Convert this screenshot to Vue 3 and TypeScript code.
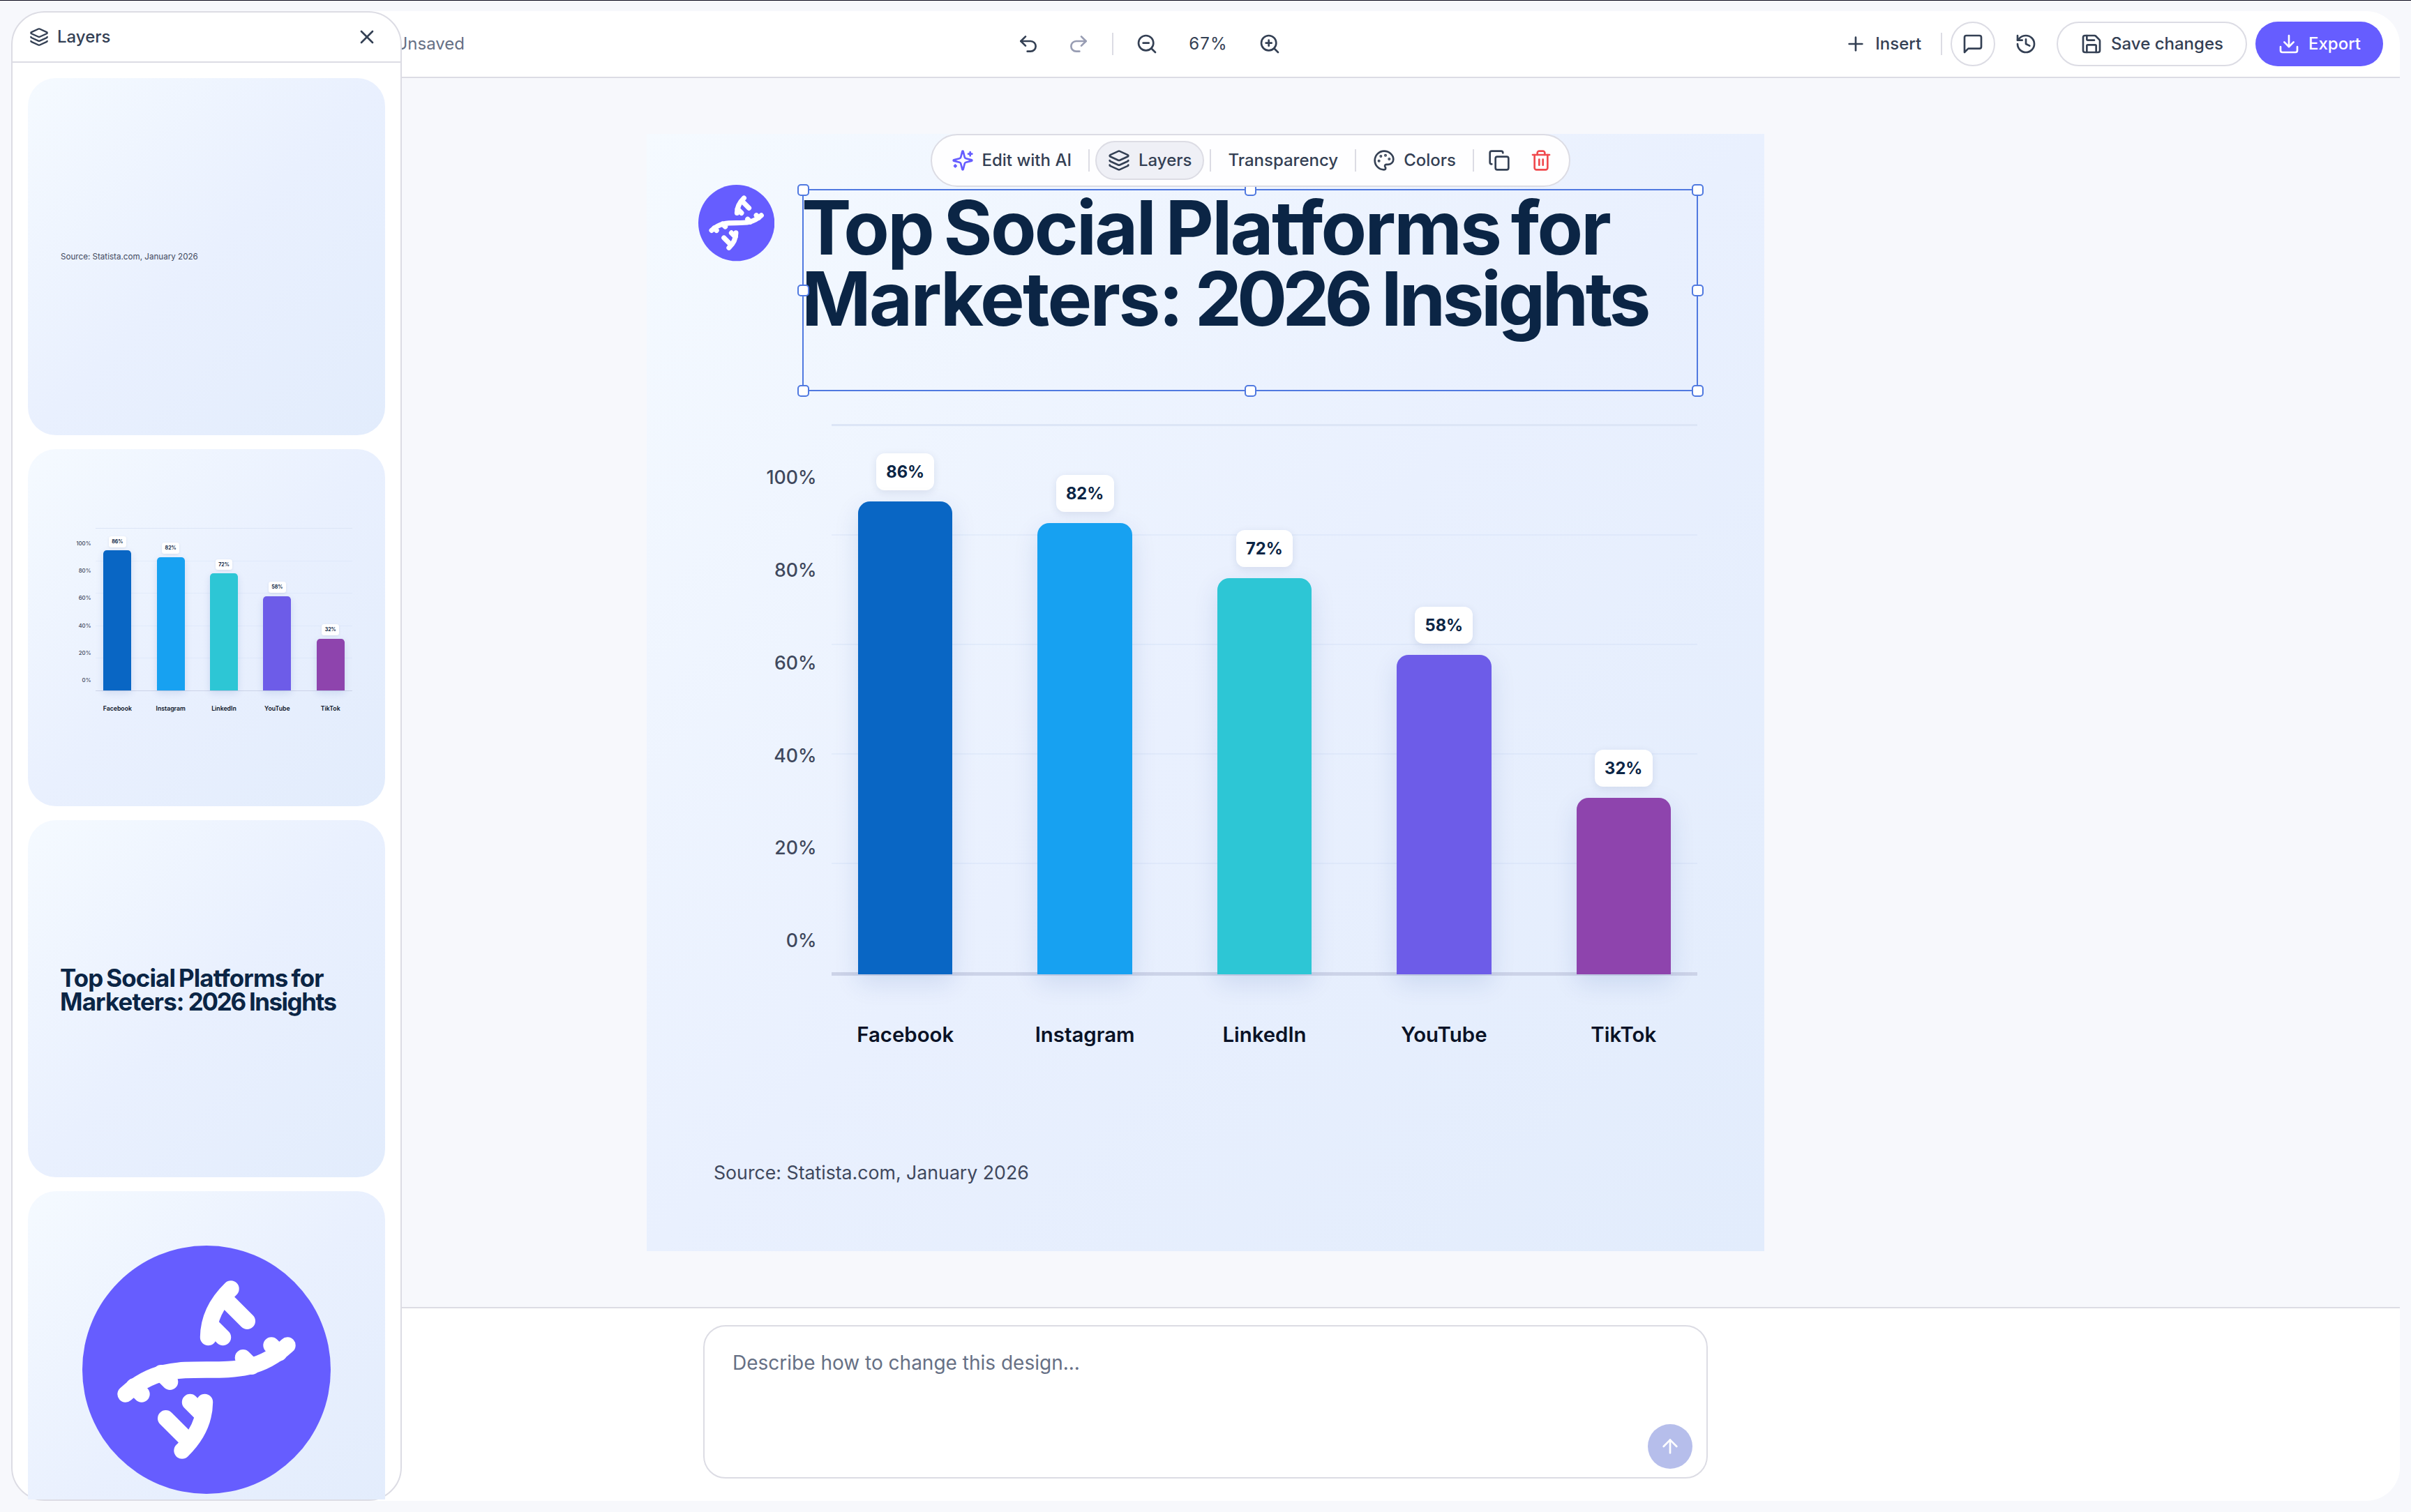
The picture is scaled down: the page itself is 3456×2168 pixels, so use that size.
<script setup lang="ts">
import { h, type FunctionalComponent } from 'vue'

type Shape = [tag: string, attrs: Record<string, string | number>]

const p = (d: string): Shape => ['path', { d }]

const icons: Record<string, Shape[]> = {
  layers: [
    p('M12.83 2.18a2 2 0 0 0-1.66 0L2.6 6.08a1 1 0 0 0 0 1.83l8.58 3.91a2 2 0 0 0 1.66 0l8.58-3.9a1 1 0 0 0 0-1.83z'),
    p('M2 12a1 1 0 0 0 .58.91l8.6 3.91a2 2 0 0 0 1.65 0l8.58-3.9A1 1 0 0 0 22 12'),
    p('M2 17a1 1 0 0 0 .58.91l8.6 3.91a2 2 0 0 0 1.65 0l8.58-3.9A1 1 0 0 0 22 17'),
  ],
  close: [p('M18 6 6 18'), p('m6 6 12 12')],
  undo: [p('M9 14 4 9l5-5'), p('M4 9h10.5a5.5 5.5 0 0 1 0 11H11')],
  redo: [p('m15 14 5-5-5-5'), p('M20 9H9.5a5.5 5.5 0 0 0 0 11H13')],
  zoomOut: [['circle', { cx: 11, cy: 11, r: 8 }], p('m21 21-4.35-4.35'), p('M8 11h6')],
  zoomIn: [['circle', { cx: 11, cy: 11, r: 8 }], p('m21 21-4.35-4.35'), p('M11 8v6'), p('M8 11h6')],
  plus: [p('M5 12h14'), p('M12 5v14')],
  comment: [p('M21 15a2 2 0 0 1-2 2H7l-4 4V5a2 2 0 0 1 2-2h14a2 2 0 0 1 2 2z')],
  history: [p('M3 12a9 9 0 1 0 9-9 9.75 9.75 0 0 0-6.74 2.74L3 8'), p('M3 3v5h5'), p('M12 7v5l4 2')],
  save: [
    p('M15.2 3a2 2 0 0 1 1.4.6l3.8 3.8a2 2 0 0 1 .6 1.4V19a2 2 0 0 1-2 2H5a2 2 0 0 1-2-2V5a2 2 0 0 1 2-2z'),
    p('M17 21v-7a1 1 0 0 0-1-1H8a1 1 0 0 0-1 1v7'),
    p('M7 3v4a1 1 0 0 0 1 1h7'),
  ],
  download: [p('M21 15v4a2 2 0 0 1-2 2H5a2 2 0 0 1-2-2v-4'), p('m7 10 5 5 5-5'), p('M12 15V3')],
  sparkles: [
    p('M9.937 15.5A2 2 0 0 0 8.5 14.063l-6.135-1.582a.5.5 0 0 1 0-.962L8.5 9.936A2 2 0 0 0 9.937 8.5l1.582-6.135a.5.5 0 0 1 .963 0L14.063 8.5A2 2 0 0 0 15.5 9.937l6.135 1.581a.5.5 0 0 1 0 .964L15.5 14.063a2 2 0 0 0-1.437 1.437l-1.582 6.135a.5.5 0 0 1-.963 0z'),
    p('M20 3v4'), p('M22 5h-4'), p('M4 17v2'), p('M5 18H3'),
  ],
  palette: [
    p('M12 2C6.5 2 2 6.5 2 12s4.5 10 10 10c.926 0 1.648-.746 1.648-1.688 0-.437-.18-.835-.437-1.125-.29-.289-.438-.652-.438-1.125a1.64 1.64 0 0 1 1.668-1.668h1.996c3.051 0 5.555-2.503 5.555-5.554C21.965 6.012 17.461 2 12 2z'),
    ['circle', { cx: 13.5, cy: 6.5, r: 0.5, fill: 'currentColor' }],
    ['circle', { cx: 17.5, cy: 10.5, r: 0.5, fill: 'currentColor' }],
    ['circle', { cx: 8.5, cy: 7.5, r: 0.5, fill: 'currentColor' }],
    ['circle', { cx: 6.5, cy: 12.5, r: 0.5, fill: 'currentColor' }],
  ],
  copy: [
    ['rect', { x: 8, y: 8, width: 14, height: 14, rx: 2 }],
    p('M4 16c-1.1 0-2-.9-2-2V4c0-1.1.9-2 2-2h10c1.1 0 2 .9 2 2'),
  ],
  trash: [
    p('M3 6h18'), p('M19 6v14c0 1-1 2-2 2H7c-1 0-2-1-2-2V6'),
    p('M8 6V4c0-1 1-2 2-2h4c1 0 2 1 2 2v2'), p('M10 11v6'), p('M14 11v6'),
  ],
  arrowUp: [p('m5 12 7-7 7 7'), p('M12 19V5')],
}

const Icon: FunctionalComponent<{ name: string; size?: number }> = (props) =>
  h(
    'svg',
    {
      width: props.size ?? 32,
      height: props.size ?? 32,
      viewBox: '0 0 24 24',
      fill: 'none',
      stroke: 'currentColor',
      'stroke-width': 2,
      'stroke-linecap': 'round',
      'stroke-linejoin': 'round',
    },
    icons[props.name].map(([tag, attrs]) => h(tag, attrs)),
  )
Icon.props = ['name', 'size']

const half = [
  'M213 62Q181 93 180.500 131.500',
  'M204 76 236.300 108.300',
  'M183.500 113.500 201.500 131.500',
  'M271 143 282 154',
  'M230.400 160.700 243 173.300',
]

const Logo: FunctionalComponent = () =>
  h('svg', { viewBox: '0 0 356 356' }, [
    h('circle', { cx: 178, cy: 178, r: 178, fill: '#665dff' }),
    h('g', { fill: 'none', stroke: '#fff', 'stroke-width': 23.4, 'stroke-linecap': 'round', 'stroke-linejoin': 'round' }, [
      h('path', { d: 'M62 213C100 178 135 178 178 178S256 178 294 143' }),
      ...half.map((d) => h('path', { d })),
      h('g', { transform: 'rotate(180 178 178)' }, half.map((d) => h('path', { d }))),
    ]),
  ])

const platforms = [
  { name: 'Facebook', value: 86, color: '#0966c4' },
  { name: 'Instagram', value: 82, color: '#17a1f1' },
  { name: 'LinkedIn', value: 72, color: '#2dc6d5' },
  { name: 'YouTube', value: 58, color: '#6d5ce8' },
  { name: 'TikTok', value: 32, color: '#8e44ad' },
]
const ticks = [100, 80, 60, 40, 20, 0]

const BarChart: FunctionalComponent = () =>
  h('div', { class: 'chart' }, [
    h('div', { class: 'chart-axis' }, ticks.map((t) => h('span', `${t}%`))),
    h('div', { class: 'chart-body' }, [
      h('div', { class: 'chart-plot' }, [
        h('div', { class: 'chart-grid' }, ticks.map(() => h('i'))),
        ...platforms.map((b) =>
          h('div', { class: 'chart-col' }, [
            h('span', { class: 'chart-badge' }, `${b.value}%`),
            h('div', {
              class: 'chart-bar',
              style: { height: `calc(var(--u) * ${b.value * 7.883})`, background: b.color },
            }),
          ]),
        ),
      ]),
      h('div', { class: 'chart-names' }, platforms.map((b) => h('span', b.name))),
    ]),
  ])

const handles = ['tl', 'tc', 'tr', 'ml', 'mr', 'bl', 'bc', 'br']
</script>

<template>
  <div class="page">
    <main class="editor">
      <header class="topbar">
        <span class="status">Unsaved</span>
        <div class="history-tools">
          <button class="icon-btn"><Icon name="undo" /></button>
          <button class="icon-btn off"><Icon name="redo" /></button>
          <i class="rule"></i>
          <button class="icon-btn"><Icon name="zoomOut" /></button>
          <span class="zoom">67%</span>
          <button class="icon-btn"><Icon name="zoomIn" /></button>
        </div>
        <div class="actions">
          <button class="label-btn insert"><Icon name="plus" />Insert</button>
          <i class="rule"></i>
          <button class="icon-btn ring"><Icon name="comment" /></button>
          <button class="icon-btn"><Icon name="history" /></button>
          <button class="label-btn save"><Icon name="save" />Save changes</button>
          <button class="label-btn export"><Icon name="download" />Export</button>
        </div>
      </header>

      <section class="stage">
        <div class="artboard sky">
          <Logo class="brand" />
          <h1 class="headline">
            <span class="line first">Top Social Platforms for</span>
            <span class="line second">Marketers: <span class="year">2026</span> <span class="tail">Insights</span></span>
          </h1>
          <BarChart class="main-chart" />
          <p class="source">Source: Statista.com, January 2026</p>
          <div class="selection"><b v-for="k in handles" :key="k" :class="k"></b></div>
          <nav class="float-bar">
            <button class="label-btn tool"><Icon name="sparkles" class="violet" />Edit with AI</button>
            <i class="rule"></i>
            <button class="label-btn tool active"><Icon name="layers" />Layers</button>
            <i class="rule"></i>
            <button class="label-btn tool">Transparency</button>
            <i class="rule"></i>
            <button class="label-btn tool"><Icon name="palette" />Colors</button>
            <i class="rule"></i>
            <div class="pair">
              <button class="square"><Icon name="copy" /></button>
              <button class="square red"><Icon name="trash" /></button>
            </div>
          </nav>
        </div>
      </section>

      <footer class="prompt-area">
        <div class="prompt">
          <span class="placeholder">Describe how to change this design...</span>
          <button class="send"><Icon name="arrowUp" /></button>
        </div>
      </footer>
    </main>

    <aside class="panel">
      <div class="panel-head">
        <Icon name="layers" :size="28" />
        <span>Layers</span>
        <Icon name="close" class="close" />
      </div>
      <div class="cards">
        <div class="card sky mid"><p class="mini-source">Source: Statista.com, January 2026</p></div>
        <div class="card sky"><BarChart class="mini-chart" /></div>
        <div class="card sky mid">
          <h2 class="mini-title">
            <span class="line first">Top Social Platforms for</span>
            <span class="line second">Marketers: <span class="year">2026</span> <span class="tail">Insights</span></span>
          </h2>
        </div>
        <div class="card sky mid center"><Logo class="mini-logo" /></div>
      </div>
    </aside>
  </div>
</template>

<style>
body {
  background: #f7f8fc;
}

.chart {
  display: flex;
  gap: calc(var(--u) * 21.5);
  width: calc(var(--u) * 1341);
}
.chart-axis {
  width: calc(var(--u) * 78.5);
  padding-top: calc(var(--u) * 10.4);
  color: #3f485d;
  font-size: calc(var(--u) * 26.7);
  font-weight: 500;
  text-align: right;
}
.chart-axis span {
  display: block;
  line-height: calc(var(--u) * 132.7);
}
.chart-body {
  width: calc(var(--u) * 1241);
}
.chart-plot {
  position: relative;
  display: flex;
  align-items: flex-end;
  justify-content: space-between;
  box-sizing: border-box;
  height: calc(var(--u) * 791);
  padding: 0 calc(var(--u) * 38) calc(var(--u) * 2.5);
}
.chart-grid {
  position: absolute;
  inset: 0;
  display: flex;
  flex-direction: column;
  justify-content: space-between;
}
.chart-grid i {
  height: calc(var(--u) * 1.5);
  background: rgba(130, 165, 225, 0.09);
}
.chart-grid i:first-child {
  height: calc(var(--u) * 3);
  background: #dce5f6;
}
.chart-grid i:last-child {
  height: calc(var(--u) * 5);
  background: #ccd3e8;
}
.chart-col {
  position: relative;
  display: flex;
  flex-direction: column;
  align-items: center;
  gap: calc(var(--u) * 16);
  width: calc(var(--u) * 135.4);
}
.chart-badge {
  padding: 0 calc(var(--u) * 14.3);
  border-radius: calc(var(--u) * 12);
  background: #fff;
  box-shadow: 0 calc(var(--u) * 3) calc(var(--u) * 12) rgba(20, 40, 90, 0.1);
  color: #0b2545;
  font-size: calc(var(--u) * 23.7);
  font-weight: 700;
  line-height: calc(var(--u) * 53);
}
.chart-bar {
  width: 100%;
  border-radius: calc(var(--u) * 17) calc(var(--u) * 17) 0 0;
  box-shadow: 0 calc(var(--u) * 12) calc(var(--u) * 36) rgba(10, 60, 150, 0.12);
}
.chart-names {
  display: flex;
  justify-content: space-between;
  margin-top: calc(var(--u) * 67);
  padding: 0 calc(var(--u) * 38);
  color: #0a1226;
  font-size: calc(var(--u) * 29.4);
  font-weight: 600;
  line-height: calc(var(--u) * 36);
}
.chart-names span {
  display: flex;
  justify-content: center;
  width: calc(var(--u) * 135.4);
}
</style>

<style scoped>
.page {
  position: relative;
  box-sizing: border-box;
  width: 3456px;
  height: 2168px;
  padding: 15px 16px 16px;
  overflow: hidden;
  border-top: 1px solid #0c0a1d;
  background: #f7f8fc;
  color: #344054;
  font-family: Inter, "Liberation Sans", sans-serif;
  font-size: 24px;
}
button {
  display: flex;
  align-items: center;
  justify-content: center;
  gap: 12px;
  box-sizing: border-box;
  margin: 0;
  padding: 0;
  border: 0;
  background: none;
  color: inherit;
  font: inherit;
  font-weight: 500;
  white-space: nowrap;
}
svg {
  display: block;
  flex: none;
}
.rule {
  width: 2px;
  height: 32px;
  background: #dcdce4;
}
.editor {
  display: flex;
  flex-direction: column;
  height: 2136px;
  overflow: hidden;
  border-radius: 48px;
  background: #fff;
}
.topbar {
  display: flex;
  align-items: center;
  box-sizing: border-box;
  height: 96px;
  padding-right: 24px;
  border-bottom: 2px solid #dcdce4;
}
.status {
  width: 650px;
  padding-bottom: 2px;
  text-align: right;
  color: #667085;
}
.history-tools {
  display: flex;
  align-items: center;
  gap: 8px;
  margin-left: 776px;
}
.history-tools .rule {
  margin: 0 8px;
}
.icon-btn {
  width: 64px;
  height: 64px;
}
.off {
  color: #989db3;
}
.ring {
  border: 2px solid #dcdce4;
  border-radius: 50%;
}
.zoom {
  width: 96px;
  padding-bottom: 2px;
  text-align: center;
  letter-spacing: 1.1px;
}
.actions {
  display: flex;
  align-items: center;
  gap: 12px;
  margin-left: auto;
}
/* Labels sit one pixel above the optical centre of their icon. */
.label-btn {
  height: 64px;
  padding-bottom: 2px;
}
.label-btn svg {
  margin-top: 2px;
}
.insert {
  padding-left: 16px;
  padding-right: 16px;
}
.save,
.export {
  padding-left: 32px;
  padding-right: 32px;
  border-radius: 32px;
}
.save {
  border: 2px solid #dcdce4;
}
.export {
  background: #665dff;
  color: #fff;
}

.stage {
  display: flex;
  justify-content: center;
  box-sizing: border-box;
  height: 1762px;
  padding-top: 80px;
  background: #f7f8fc;
}
.sky {
  background: linear-gradient(135deg, #f5faff 0%, #e9f0fe 50%, #e2ecfc 100%);
}
.artboard {
  position: relative;
  width: 1602px;
  height: 1602px;
}
.brand {
  position: absolute;
  left: 73.5px;
  top: 73.3px;
  width: 109.3px;
  height: 109.3px;
}
.line {
  display: block;
}
.first {
  letter-spacing: -0.0252em;
  word-spacing: -0.067em;
}
.second {
  letter-spacing: -0.025em;
  word-spacing: -0.035em;
}
.second .year {
  letter-spacing: -0.066em;
}
.second .tail {
  letter-spacing: -0.042em;
}
.headline {
  position: absolute;
  left: 222px;
  top: 83px;
  margin: 0;
  color: #0b2545;
  font-size: 107px;
  font-weight: 700;
  line-height: 102px;
  white-space: nowrap;
}
.main-chart {
  --u: 1px;
  position: absolute;
  left: 165px;
  top: 416px;
}
.source {
  position: absolute;
  left: 96px;
  top: 1471px;
  margin: 0;
  color: #3f485d;
  font-size: 26.7px;
  line-height: 36px;
}
.selection {
  position: absolute;
  left: 223px;
  top: 79px;
  width: 1280px;
  height: 286px;
  border: 2px solid #5079e0;
}
.selection b {
  position: absolute;
  box-sizing: border-box;
  width: 17px;
  height: 17px;
  margin: -8.5px;
  border: 2px solid #5079e0;
  border-radius: 5px;
  background: #fff;
}
.tl, .tc, .tr { top: -1px; }
.ml, .mr { top: 50%; }
.bl, .bc, .br { top: calc(100% + 1px); }
.tl, .ml, .bl { left: -1px; }
.tc, .bc { left: 50%; }
.tr, .mr, .br { left: calc(100% + 1px); }

.float-bar {
  position: absolute;
  left: 406.5px;
  top: 0;
  display: flex;
  align-items: center;
  gap: 8px;
  box-sizing: border-box;
  height: 76px;
  padding: 0 12px;
  border: 2px solid #dcdce4;
  border-radius: 38px;
  background: #fefeff;
}
.tool {
  height: 56px;
  padding-left: 16px;
  padding-right: 16px;
}
.active {
  border: 2px solid #dcdce4;
  border-radius: 28px;
  background: #eff0f6;
}
.violet {
  color: #665dff;
}
.pair {
  display: flex;
  gap: 4px;
}
.square {
  width: 56px;
  height: 56px;
}
.red {
  color: #f04a4e;
}

.prompt-area {
  display: flex;
  justify-content: center;
  box-sizing: border-box;
  height: 278px;
  padding-top: 24px;
  border-top: 2px solid #dcdce4;
}
.prompt {
  display: flex;
  justify-content: space-between;
  box-sizing: border-box;
  width: 1440px;
  height: 220px;
  padding: 34px 20px 12px 40px;
  border: 2px solid #dcdce4;
  border-radius: 32px;
}
.placeholder {
  color: #667085;
  font-size: 28px;
  line-height: 36px;
}
.send {
  align-self: flex-end;
  width: 64px;
  height: 64px;
  border-radius: 50%;
  background: #b6beeb;
  color: #fff;
}

.panel {
  position: absolute;
  left: 16px;
  top: 15px;
  display: flex;
  flex-direction: column;
  box-sizing: border-box;
  width: 560px;
  height: 2136px;
  border: 2px solid #dcdce4;
  border-radius: 48px;
  background: #fff;
}
.panel-head {
  display: flex;
  align-items: center;
  gap: 12px;
  box-sizing: border-box;
  height: 72px;
  padding: 0 32px 0 24px;
  border-bottom: 2px solid #dcdce4;
  font-weight: 500;
}
.panel-head span {
  padding-bottom: 1px;
}
.close {
  margin-left: auto;
}
.cards {
  display: flex;
  flex: 1;
  flex-direction: column;
  gap: 20px;
  min-height: 0;
  padding: 22px 22px 0;
  overflow: hidden;
}
.card {
  display: flex;
  flex: none;
  box-sizing: border-box;
  width: 512px;
  height: 512px;
  border-radius: 40px;
}
.mid {
  align-items: center;
  padding-left: 47px;
}
.center {
  justify-content: center;
  padding: 0;
}
.mini-source {
  margin: 0;
  color: #3f485d;
  font-size: 11.63px;
}
.mini-chart {
  --u: 0.2966px;
  margin: 112.6px 0 0 67.3px;
}
.mini-title {
  margin: 0 0 25px -1px;
  color: #0b2545;
  font-size: 34.9px;
  font-weight: 700;
  line-height: 33.4px;
  white-space: nowrap;
}
.mini-logo {
  width: 356px;
  height: 356px;
}
</style>
